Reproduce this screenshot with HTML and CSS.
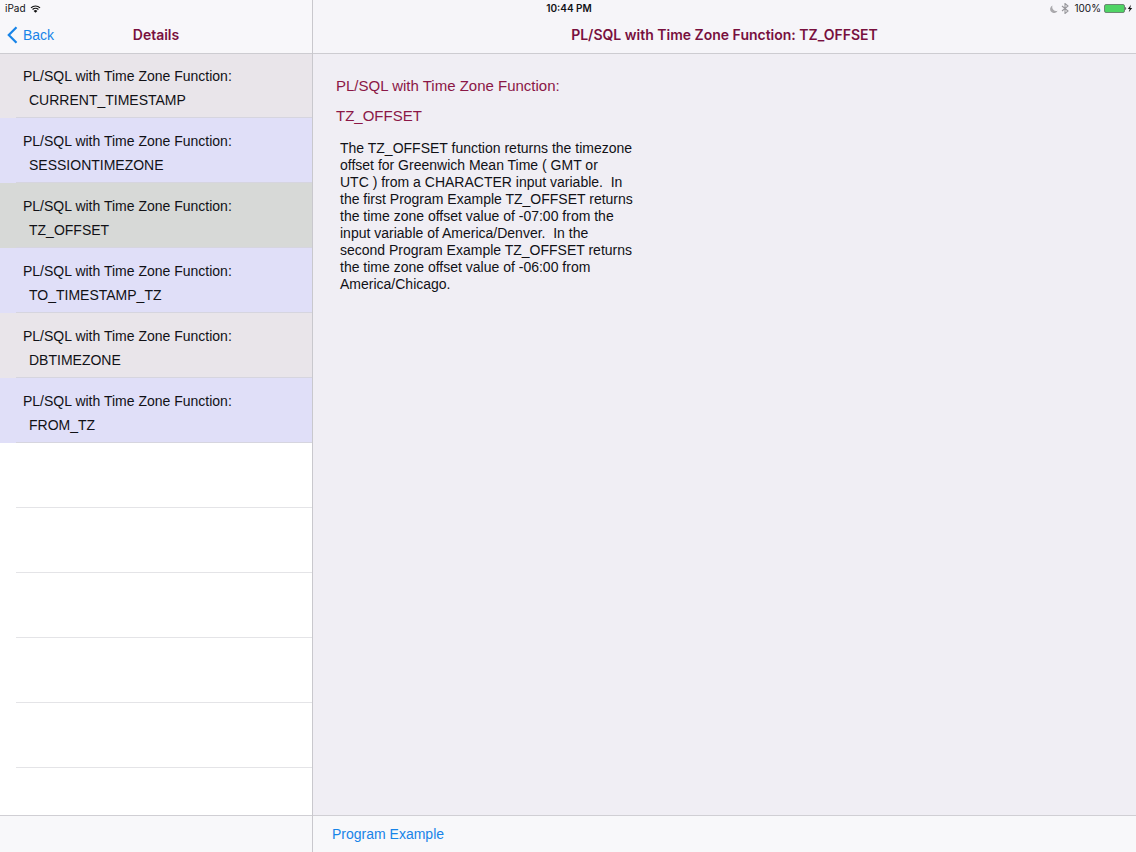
FILE: index.html
```html
<!DOCTYPE html>
<html lang="en">
<head>
<meta charset="utf-8">
<meta name="viewport" content="width=device-width, initial-scale=1">
<title>PL/SQL with Time Zone Function: TZ_OFFSET</title>
<link rel="stylesheet" href="styles.css">
</head>
<body>
<div class="app">
  <div class="status">
    <div class="status-left">
      <span>iPad</span>
      <svg class="wifi" viewBox="0 0 12 9" aria-hidden="true"><path d="M.9 3.2a7.4 7.4 0 0 1 10.2 0M2.7 5.1a4.8 4.8 0 0 1 6.6 0" fill="none" stroke="#111" stroke-width="1.3"/><path d="M6 8.8 3.9 6.7a3 3 0 0 1 4.2 0z" fill="#111"/></svg>
    </div>
    <div class="clock">10:44 PM</div>
    <div class="status-right">
      <svg class="moon" viewBox="0 0 8 8" aria-hidden="true"><path d="M2.6.5A3.9 3.9 0 1 0 7.6 5.7 3.9 3.9 0 0 1 2.6.5z" fill="#aaa9ad"/></svg>
      <svg class="bluetooth" viewBox="0 0 8 11" aria-hidden="true"><path d="M1 3l6 5-3 2.500V.5L7 3 1 8" fill="none" stroke="#98979c" stroke-width="1.1"/></svg>
      <span>100%</span>
      <svg class="battery" viewBox="0 0 29 9" aria-hidden="true"><rect x=".5" y=".5" width="20" height="8" rx="1.500" fill="#4fd465" stroke="#55605a" stroke-width=".7"/><path d="M21.300 3c1.200.3 1.200 2.700 0 3z" fill="#333"/><path d="M27 .7 23.800 5h1.900L24.700 8.300 28.200 4h-2z" fill="#111"/></svg>
    </div>
  </div>

  <aside class="master">
    <header class="nav">
      <button class="back" type="button">
        <svg class="chevron" viewBox="0 0 11 18" aria-hidden="true"><path d="M9.500 1.300 1.800 9l7.700 7.700" fill="none" stroke="#1784e8" stroke-width="2.200"/></svg>
        <span>Back</span>
      </button>
      <h2 class="nav-title">Details</h2>
      <span></span>
    </header>
    <ul class="list">
      <li class="row rose"><a href="#current">PL/SQL with Time Zone Function:<span class="name">CURRENT_TIMESTAMP</span></a></li>
      <li class="row lilac"><a href="#session">PL/SQL with Time Zone Function:<span class="name">SESSIONTIMEZONE</span></a></li>
      <li class="row selected"><a href="#offset" aria-current="page">PL/SQL with Time Zone Function:<span class="name">TZ_OFFSET</span></a></li>
      <li class="row lilac"><a href="#to">PL/SQL with Time Zone Function:<span class="name">TO_TIMESTAMP_TZ</span></a></li>
      <li class="row rose"><a href="#db">PL/SQL with Time Zone Function:<span class="name">DBTIMEZONE</span></a></li>
      <li class="row lilac"><a href="#from">PL/SQL with Time Zone Function:<span class="name">FROM_TZ</span></a></li>
      <li class="row"></li>
      <li class="row"></li>
      <li class="row"></li>
      <li class="row"></li>
      <li class="row"></li>
      <li class="row"></li>
    </ul>
    <footer class="toolbar"></footer>
  </aside>

  <main class="detail">
    <header class="nav detail-nav">
      <h1 class="nav-title">PL/SQL with Time Zone Function: TZ_OFFSET</h1>
    </header>
    <article class="content" id="offset">
      <h2 class="heading">PL/SQL with Time Zone Function:</h2>
      <h3 class="heading">TZ_OFFSET</h3>
      <p class="description">The TZ_OFFSET function returns the timezone
offset for Greenwich Mean Time ( GMT or
UTC ) from a CHARACTER input variable.  In
the first Program Example TZ_OFFSET returns
the time zone offset value of -07:00 from the
input variable of America/Denver.  In the
second Program Example TZ_OFFSET returns
the time zone offset value of -06:00 from
America/Chicago.</p>
    </article>
    <footer class="toolbar"><button class="example" type="button">Program Example</button></footer>
  </main>
</div>
</body>
</html>
```
FILE: styles.css
```css
* { box-sizing: border-box; }

body {
  margin: 0;
  font-family: "Liberation Sans", Arial, sans-serif;
  font-size: 14px;
  color: #111116;
}

h1, h2, h3, p, ul { margin: 0; padding: 0; }
button { border: 0; padding: 0; background: none; font: inherit; color: #1784e8; }
svg { display: block; }

.app {
  display: grid;
  grid-template-columns: minmax(240px, 313px) minmax(0, 1fr);
  grid-template-rows: 17px minmax(0, 1fr);
  height: 100vh;
}

.status {
  grid-area: 1 / 1 / 2 / 3;
  z-index: 2;
  display: grid;
  grid-template-columns: 1fr auto 1fr;
  align-items: center;
  padding: 0 3px 0 5px;
  font-family: Inter, "Liberation Sans", sans-serif;
  font-size: 10px;
  line-height: 17px;
}
.status-left, .status-right { display: flex; align-items: center; }
.status-left { gap: 4px; }
.status-right { justify-content: flex-end; gap: 3px; }
.clock { font-weight: 600; }
.wifi { width: 11px; height: 8px; }
.moon { width: 8px; height: 8px; }
.bluetooth { width: 8px; height: 11px; margin-right: 2px; }
.battery { width: 29px; height: 9px; }

.master, .detail { display: flex; flex-direction: column; min-height: 0; }
.master { grid-area: 1 / 1 / 3 / 2; background: #fff; border-right: 1px solid #c9c8cd; }
.detail { grid-area: 1 / 2 / 3 / 3; background: #f0eef4; }

.nav {
  z-index: 1;
  flex: none;
  display: grid;
  grid-template-columns: 1fr auto 1fr;
  align-items: center;
  height: 53px;
  padding: 17px 7px 0;
  background: #f8f7fa;
  box-shadow: 0 1px #cdccd1;
}
.detail-nav { grid-template-columns: auto; justify-content: center; background: #f6f5f9; }
.nav-title {
  font-family: Inter, "Liberation Sans", sans-serif;
  font-size: 14px;
  line-height: 20px;
  font-weight: 600;
  color: #78103e;
}
.back { display: flex; align-items: center; gap: 5px; line-height: 20px; }
.chevron { width: 11px; height: 18px; }

.list { flex: 1; min-height: 0; overflow: hidden; list-style: none; }
.row {
  height: 65px;
  background: linear-gradient(#e4e4e7, #e4e4e7) 16px 100% / 100% 1px no-repeat;
}
.row a { display: block; padding: 11px 23px 0; line-height: 24px; color: inherit; text-decoration: none; }
.name { display: block; padding-left: 6px; }
.rose { background-color: #e9e5ea; }
.lilac { background-color: #e0dff8; }
.selected { background-color: #d7d9d7; }
.rose, .lilac, .selected { background-image: linear-gradient(#d6d5df, #d6d5df); }

.content { flex: 1; min-height: 0; padding: 18px 23px; overflow: auto; }
.heading { font-size: 15px; line-height: 30px; font-weight: 400; color: #8b1746; }
.description { padding: 9px 4px; line-height: 17px; white-space: pre-wrap; }

.toolbar {
  flex: none;
  display: flex;
  align-items: center;
  height: 37px;
  padding: 0 19px;
  border-top: 1px solid #d0cfd4;
  background: #f8f8fa;
}
.example { line-height: 20px; }
```
